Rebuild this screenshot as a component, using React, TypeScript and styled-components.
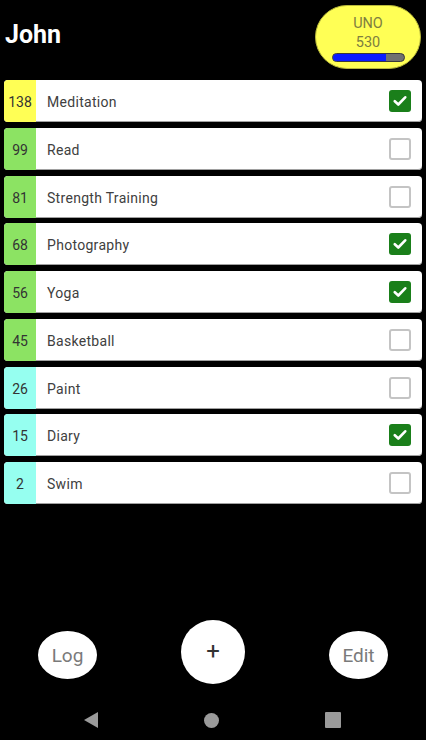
import React from "react";
import styled, { createGlobalStyle } from "styled-components";

const GlobalStyle = createGlobalStyle`
  html, body { margin: 0; padding: 0; background: #000; }
  body { font-family: Roboto, "Liberation Sans", sans-serif; }
  * { box-sizing: border-box; }
`;

const Page = styled.div`
  width: 426px;
  height: 740px;
  background: #000;
  display: flex;
  flex-direction: column;
  overflow: hidden;
`;

const Header = styled.header`
  height: 80px;
  display: flex;
  align-items: flex-start;
  justify-content: space-between;
  padding: 5px 5px 0 5px;
`;

const Title = styled.h1`
  margin: 15px 0 0 0;
  color: #fff;
  font-size: 25px;
  font-weight: 700;
  line-height: 30px;
  font-family: Roboto, "Liberation Sans", sans-serif;
`;

const Badge = styled.div`
  width: 106px;
  height: 64px;
  border-radius: 32px;
  background: #ffff55;
  border: 1px solid #b8b83a;
  display: flex;
  flex-direction: column;
  align-items: center;
  padding-top: 8px;
  color: #7e7e40;
  font-size: 14.5px;
  line-height: 19px;
`;

const Bar = styled.div`
  margin-top: 1px;
  width: 73px;
  height: 9px;
  border-radius: 5px;
  background: #707070;
  border: 1px solid #3a3a3a;
  overflow: hidden;
  display: flex;
`;

const BarFill = styled.div`
  height: 100%;
  background: #0b1cff;
`;

const List = styled.ul`
  list-style: none;
  margin: 0;
  padding: 0 4px;
  display: flex;
  flex-direction: column;
  gap: 5.75px;
`;

const Row = styled.li`
  height: 42px;
  display: flex;
  align-items: center;
  background: #fff;
  border-radius: 4px;
  overflow: hidden;
  box-shadow: inset 0 -1px 0 #a0a0a0;
`;

const Score = styled.div<{ $bg: string }>`
  width: 32px;
  height: 100%;
  background: ${(p) => p.$bg};
  display: flex;
  align-items: center;
  justify-content: center;
  padding-top: 2px;
  color: #333;
  font-size: 14px;
`;

const Name = styled.span`
  flex: 1;
  padding: 2px 0 0 11px;
  color: #404040;
  font-size: 14px;
  letter-spacing: 0.3px;
`;

const Check = styled.div<{ $on: boolean }>`
  width: 22px;
  height: 22px;
  margin-right: 11px;
  border-radius: 3px;
  background: ${(p) => (p.$on ? "#1a7f1a" : "#fff")};
  border: ${(p) => (p.$on ? "none" : "2px solid #c4c4c4")};
  display: flex;
  align-items: center;
  justify-content: center;
`;

const Spacer = styled.div`
  flex: 1;
`;

const ButtonBar = styled.div`
  height: 80px;
  display: flex;
  justify-content: space-between;
  align-items: flex-start;
  padding: 0 38px;
`;

const PillButton = styled.button`
  margin-top: 11px;
  width: 59px;
  height: 48px;
  border-radius: 50%;
  border: none;
  background: #fff;
  color: #7a7a7a;
  font-size: 19px;
  font-family: Roboto, "Liberation Sans", sans-serif;
  padding: 0;
  display: flex;
  align-items: center;
  justify-content: center;
`;

const AddButton = styled.button`
  width: 64px;
  height: 64px;
  border-radius: 50%;
  border: none;
  background: #fff;
  color: #333;
  font-size: 24px;
  font-family: Roboto, "Liberation Sans", sans-serif;
  padding: 0 0 2px 0;
  display: flex;
  align-items: center;
  justify-content: center;
`;

const NavBar = styled.nav`
  height: 40px;
  display: flex;
  align-items: center;
  padding-left: 84px;
  gap: 106px;
`;

const NavCircle = styled.div`
  width: 15px;
  height: 15px;
  border-radius: 50%;
  background: #9a9a9a;
`;

const NavSquare = styled.div`
  width: 16px;
  height: 16px;
  border-radius: 1px;
  background: #9a9a9a;
`;

const YELLOW = "#ffff55";
const GREEN = "#8ce363";
const CYAN = "#96fff0";

const items = [
  { n: 138, name: "Meditation", c: YELLOW, on: true },
  { n: 99, name: "Read", c: GREEN, on: false },
  { n: 81, name: "Strength Training", c: GREEN, on: false },
  { n: 68, name: "Photography", c: GREEN, on: true },
  { n: 56, name: "Yoga", c: GREEN, on: true },
  { n: 45, name: "Basketball", c: GREEN, on: false },
  { n: 26, name: "Paint", c: CYAN, on: false },
  { n: 15, name: "Diary", c: CYAN, on: true },
  { n: 2, name: "Swim", c: CYAN, on: false },
];

const CheckMark = () => (
  <svg width="14" height="12" viewBox="0 0 14 12">
    <path d="M1.8 6.2 L5.3 9.5 L12.2 2.3" fill="none" stroke="#fff" strokeWidth="2.6" strokeLinecap="round" strokeLinejoin="round" />
  </svg>
);

const BackIcon = () => (
  <svg width="14" height="16" viewBox="0 0 14 16">
    <path d="M14 0 L14 16 L0 8 Z" fill="#9a9a9a" />
  </svg>
);

export default function App() {
  return (
    <Page>
      <GlobalStyle />
      <Header>
        <Title>John</Title>
        <Badge>
          <span>UNO</span>
          <span>530</span>
          <Bar>
            <BarFill style={{ width: "76%" }} />
          </Bar>
        </Badge>
      </Header>
      <List>
        {items.map((it) => (
          <Row key={it.name}>
            <Score $bg={it.c}>{it.n}</Score>
            <Name>{it.name}</Name>
            <Check $on={it.on}>{it.on && <CheckMark />}</Check>
          </Row>
        ))}
      </List>
      <Spacer />
      <ButtonBar>
        <PillButton>Log</PillButton>
        <AddButton>+</AddButton>
        <PillButton>Edit</PillButton>
      </ButtonBar>
      <NavBar>
        <BackIcon />
        <NavCircle />
        <NavSquare />
      </NavBar>
    </Page>
  );
}
